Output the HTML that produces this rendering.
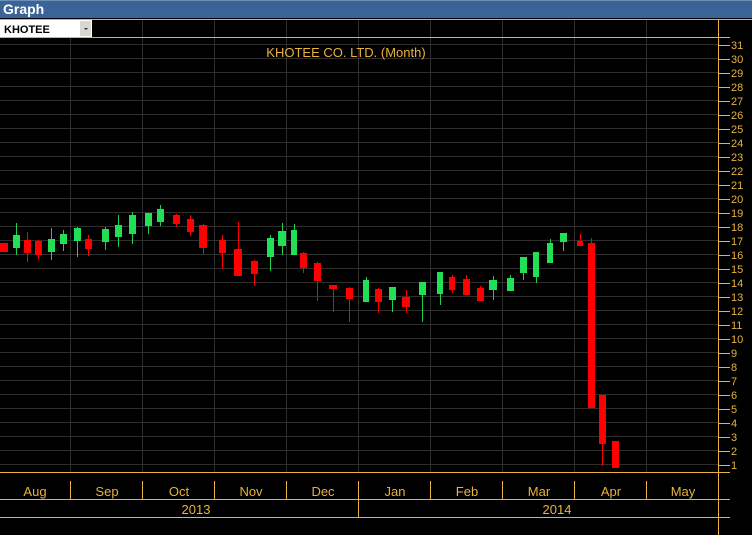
<!DOCTYPE html>
<html><head><meta charset="utf-8"><style>
body{margin:0;background:#000;width:752px;height:535px;overflow:hidden;font-family:"Liberation Sans",sans-serif}
</style></head><body>
<svg width="752" height="535" xmlns="http://www.w3.org/2000/svg" style="display:block">
<rect width="752" height="535" fill="#000"/>
<rect width="752" height="18" fill="#3a6497"/>
<rect y="0" width="752" height="1" fill="#6f8fb8"/>
<text x="3" y="14" fill="#fff" font-size="14" font-weight="bold" font-family="Liberation Sans">Graph</text>
<g stroke="#2e2e2e" stroke-width="1">
<line x1="0" x2="718" y1="44.5" y2="44.5"/><line x1="0" x2="718" y1="58.5" y2="58.5"/><line x1="0" x2="718" y1="72.5" y2="72.5"/><line x1="0" x2="718" y1="86.5" y2="86.5"/><line x1="0" x2="718" y1="100.5" y2="100.5"/><line x1="0" x2="718" y1="114.5" y2="114.5"/><line x1="0" x2="718" y1="128.5" y2="128.5"/><line x1="0" x2="718" y1="142.5" y2="142.5"/><line x1="0" x2="718" y1="156.5" y2="156.5"/><line x1="0" x2="718" y1="170.5" y2="170.5"/><line x1="0" x2="718" y1="184.5" y2="184.5"/><line x1="0" x2="718" y1="198.5" y2="198.5"/><line x1="0" x2="718" y1="212.5" y2="212.5"/><line x1="0" x2="718" y1="226.5" y2="226.5"/><line x1="0" x2="718" y1="240.5" y2="240.5"/><line x1="0" x2="718" y1="254.5" y2="254.5"/><line x1="0" x2="718" y1="268.5" y2="268.5"/><line x1="0" x2="718" y1="282.5" y2="282.5"/><line x1="0" x2="718" y1="296.5" y2="296.5"/><line x1="0" x2="718" y1="310.5" y2="310.5"/><line x1="0" x2="718" y1="324.5" y2="324.5"/><line x1="0" x2="718" y1="338.5" y2="338.5"/><line x1="0" x2="718" y1="352.5" y2="352.5"/><line x1="0" x2="718" y1="366.5" y2="366.5"/><line x1="0" x2="718" y1="380.5" y2="380.5"/><line x1="0" x2="718" y1="394.5" y2="394.5"/><line x1="0" x2="718" y1="408.5" y2="408.5"/><line x1="0" x2="718" y1="422.5" y2="422.5"/><line x1="0" x2="718" y1="436.5" y2="436.5"/><line x1="0" x2="718" y1="450.5" y2="450.5"/><line x1="0" x2="718" y1="464.5" y2="464.5"/>
<line x1="70.5" x2="70.5" y1="19" y2="472"/><line x1="142.5" x2="142.5" y1="19" y2="472"/><line x1="214.5" x2="214.5" y1="19" y2="472"/><line x1="286.5" x2="286.5" y1="19" y2="472"/><line x1="358.5" x2="358.5" y1="19" y2="472"/><line x1="430.5" x2="430.5" y1="19" y2="472"/><line x1="502.5" x2="502.5" y1="19" y2="472"/><line x1="574.5" x2="574.5" y1="19" y2="472"/><line x1="646.5" x2="646.5" y1="19" y2="472"/>
</g>
<rect x="0" y="20" width="92" height="17" fill="#fff"/>
<rect x="80" y="21" width="11" height="15" fill="#d8d8d0"/>
<path d="M84 28h4l-2 2z" fill="#333"/>
<text x="4" y="33" font-size="11" font-weight="bold" fill="#000" font-family="Liberation Sans">KHOTEE</text>
<g stroke="#e8b23e" stroke-width="1" fill="none">
<line x1="0" x2="752" y1="19.5" y2="19.5"/>
<line x1="0" x2="730" y1="37.5" y2="37.5"/>
<line x1="0" x2="730" y1="472.5" y2="472.5"/>
<line x1="718.5" x2="718.5" y1="19" y2="535"/>
<line x1="0" x2="730" y1="499.5" y2="499.5"/>
<line x1="0" x2="730" y1="517.5" y2="517.5"/>
<line x1="70.5" x2="70.5" y1="481" y2="499"/><line x1="142.5" x2="142.5" y1="481" y2="499"/><line x1="214.5" x2="214.5" y1="481" y2="499"/><line x1="286.5" x2="286.5" y1="481" y2="499"/><line x1="358.5" x2="358.5" y1="481" y2="518"/><line x1="430.5" x2="430.5" y1="481" y2="499"/><line x1="502.5" x2="502.5" y1="481" y2="499"/><line x1="574.5" x2="574.5" y1="481" y2="499"/><line x1="646.5" x2="646.5" y1="481" y2="499"/>
<path d="M718 45.5h12M718 59.5h12M718 73.5h12M718 87.5h12M718 101.5h12M718 115.5h12M718 129.5h12M718 143.5h12M718 157.5h12M718 171.5h12M718 185.5h12M718 199.5h12M718 213.5h12M718 227.5h12M718 241.5h12M718 255.5h12M718 269.5h12M718 283.5h12M718 297.5h12M718 311.5h12M718 325.5h12M718 339.5h12M718 353.5h12M718 367.5h12M718 381.5h12M718 395.5h12M718 409.5h12M718 423.5h12M718 437.5h12M718 451.5h12M718 465.5h12"/>
</g>
<g fill="#e8b23e" font-size="11" font-family="Liberation Sans">
<text x="731" y="49">31</text><text x="731" y="63">30</text><text x="731" y="77">29</text><text x="731" y="91">28</text><text x="731" y="105">27</text><text x="731" y="119">26</text><text x="731" y="133">25</text><text x="731" y="147">24</text><text x="731" y="161">23</text><text x="731" y="175">22</text><text x="731" y="189">21</text><text x="731" y="203">20</text><text x="731" y="217">19</text><text x="731" y="231">18</text><text x="731" y="245">17</text><text x="731" y="259">16</text><text x="731" y="273">15</text><text x="731" y="287">14</text><text x="731" y="301">13</text><text x="731" y="315">12</text><text x="731" y="329">11</text><text x="731" y="343">10</text><text x="731" y="357">9</text><text x="731" y="371">8</text><text x="731" y="385">7</text><text x="731" y="399">6</text><text x="731" y="413">5</text><text x="731" y="427">4</text><text x="731" y="441">3</text><text x="731" y="455">2</text><text x="731" y="469">1</text>
</g>
<g fill="#e8b23e" font-size="13" font-family="Liberation Sans" text-anchor="middle">
<text x="346" y="57">KHOTEE CO. LTD. (Month)</text>
<text x="35" y="496">Aug</text><text x="107" y="496">Sep</text><text x="179" y="496">Oct</text><text x="251" y="496">Nov</text><text x="323" y="496">Dec</text><text x="395" y="496">Jan</text><text x="467" y="496">Feb</text><text x="539" y="496">Mar</text><text x="611" y="496">Apr</text><text x="683" y="496">May</text>
<text x="196" y="514">2013</text><text x="557" y="514">2014</text>
</g>
<g stroke="#ff0000" stroke-width="1">
<line x1="27.5" x2="27.5" y1="232" y2="262"/><line x1="38.5" x2="38.5" y1="240" y2="259"/><line x1="88.5" x2="88.5" y1="235" y2="256"/><line x1="176.5" x2="176.5" y1="214" y2="227"/><line x1="190.5" x2="190.5" y1="215" y2="236"/><line x1="203.5" x2="203.5" y1="224" y2="254"/><line x1="222.5" x2="222.5" y1="235" y2="269"/><line x1="238.5" x2="238.5" y1="222" y2="276"/><line x1="254.5" x2="254.5" y1="260" y2="286"/><line x1="303.5" x2="303.5" y1="252" y2="273"/><line x1="317.5" x2="317.5" y1="262" y2="301"/><line x1="333.5" x2="333.5" y1="285" y2="312"/><line x1="349.5" x2="349.5" y1="287" y2="322"/><line x1="378.5" x2="378.5" y1="288" y2="313"/><line x1="406.5" x2="406.5" y1="290" y2="313"/><line x1="452.5" x2="452.5" y1="275" y2="293"/><line x1="466.5" x2="466.5" y1="275" y2="295"/><line x1="480.5" x2="480.5" y1="286" y2="301"/><line x1="580.5" x2="580.5" y1="234" y2="246"/><line x1="591.5" x2="591.5" y1="238" y2="408"/><line x1="602.5" x2="602.5" y1="395" y2="466"/>
</g>
<g stroke="#1ed04a" stroke-width="1">
<line x1="16.5" x2="16.5" y1="223" y2="255"/><line x1="51.5" x2="51.5" y1="228" y2="260"/><line x1="63.5" x2="63.5" y1="230" y2="251"/><line x1="77.5" x2="77.5" y1="227" y2="257"/><line x1="105.5" x2="105.5" y1="227" y2="250"/><line x1="118.5" x2="118.5" y1="215" y2="247"/><line x1="132.5" x2="132.5" y1="212" y2="244"/><line x1="148.5" x2="148.5" y1="213" y2="234"/><line x1="160.5" x2="160.5" y1="205" y2="226"/><line x1="270.5" x2="270.5" y1="235" y2="271"/><line x1="282.5" x2="282.5" y1="223" y2="255"/><line x1="294.5" x2="294.5" y1="224" y2="255"/><line x1="366.5" x2="366.5" y1="277" y2="302"/><line x1="392.5" x2="392.5" y1="287" y2="312"/><line x1="422.5" x2="422.5" y1="282" y2="322"/><line x1="440.5" x2="440.5" y1="272" y2="305"/><line x1="493.5" x2="493.5" y1="276" y2="300"/><line x1="510.5" x2="510.5" y1="275" y2="291"/><line x1="523.5" x2="523.5" y1="257" y2="280"/><line x1="536.5" x2="536.5" y1="252" y2="283"/><line x1="550.5" x2="550.5" y1="239" y2="263"/><line x1="563.5" x2="563.5" y1="233" y2="251"/>
</g>
<g fill="#ff0000">
<rect x="0" y="243" width="8" height="9"/><rect x="24" y="240" width="7" height="13"/><rect x="35" y="241" width="7" height="14"/><rect x="85" y="239" width="7" height="10"/><rect x="173" y="215" width="7" height="9"/><rect x="187" y="219" width="7" height="13"/><rect x="199" y="225" width="8" height="23"/><rect x="219" y="240" width="7" height="13"/><rect x="234" y="249" width="8" height="27"/><rect x="251" y="261" width="7" height="13"/><rect x="300" y="253" width="7" height="15"/><rect x="314" y="263" width="7" height="18"/><rect x="329" y="285" width="8" height="4"/><rect x="346" y="288" width="7" height="11"/><rect x="375" y="289" width="7" height="13"/><rect x="402" y="297" width="8" height="10"/><rect x="449" y="277" width="6" height="13"/><rect x="463" y="279" width="7" height="16"/><rect x="477" y="288" width="7" height="13"/><rect x="577" y="241" width="6" height="5"/><rect x="588" y="243" width="7" height="165"/><rect x="599" y="395" width="7" height="49"/><rect x="612" y="441" width="7" height="27"/>
</g>
<g fill="#22e055">
<rect x="13" y="235" width="7" height="13"/><rect x="48" y="239" width="7" height="13"/><rect x="60" y="234" width="7" height="10"/><rect x="74" y="228" width="7" height="13"/><rect x="102" y="229" width="7" height="13"/><rect x="115" y="225" width="7" height="12"/><rect x="129" y="215" width="7" height="19"/><rect x="145" y="213" width="7" height="13"/><rect x="157" y="209" width="7" height="13"/><rect x="267" y="238" width="7" height="19"/><rect x="278" y="231" width="8" height="15"/><rect x="291" y="230" width="6" height="25"/><rect x="363" y="280" width="6" height="22"/><rect x="389" y="287" width="7" height="13"/><rect x="419" y="282" width="7" height="13"/><rect x="437" y="272" width="6" height="22"/><rect x="489" y="280" width="8" height="10"/><rect x="507" y="278" width="7" height="13"/><rect x="520" y="257" width="7" height="16"/><rect x="533" y="252" width="6" height="25"/><rect x="547" y="243" width="6" height="20"/><rect x="560" y="233" width="7" height="9"/>
</g>
</svg>
</body></html>
